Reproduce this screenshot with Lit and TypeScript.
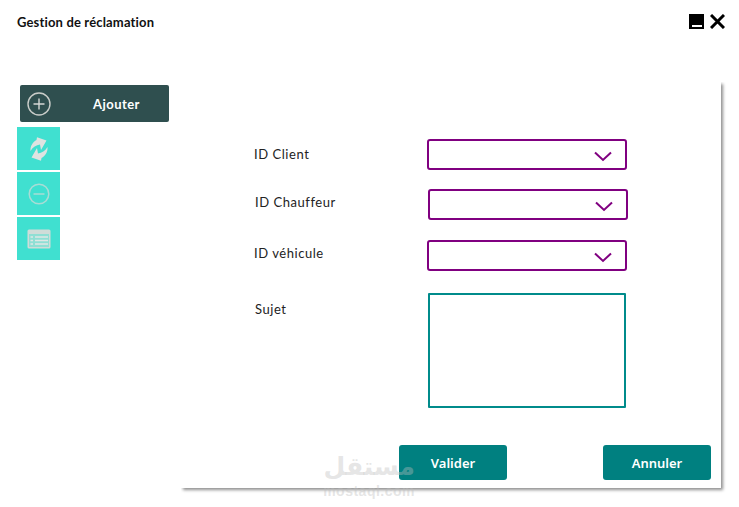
import { LitElement, html, css } from "lit";
import { customElement } from "lit/decorators.js";

const chevron = html`<svg class="chev" width="18" height="11" viewBox="0 0 18 11"><path d="M1 1.5 L9 9 L17 1.5" fill="none" stroke="#800080" stroke-width="2"/></svg>`;

@customElement("app-root")
export class AppRoot extends LitElement {
  static styles = css`
    :host { display: block; position: relative; width: 739px; height: 507px; background: #fff; overflow: hidden; font-family: "Lato", "Liberation Sans", sans-serif; color: #111; }
    .head { height: 82px; box-sizing: border-box; display: flex; align-items: flex-start; justify-content: space-between; padding: 14px 14px 0 17px; }
    .title { font-size: 13px; font-weight: 700; line-height: 17px; letter-spacing: 0.16px; color: #111; }
    .winbtns { display: flex; align-items: center; gap: 6px; }
    .min { display: flex; align-items: flex-end; justify-content: center; width: 15px; height: 15px; background: #000; box-sizing: border-box; padding-bottom: 2px; }
    .min i { display: block; width: 10px; height: 2px; background: #fff; }
    .body { display: flex; }
    .side { width: 181px; padding: 3px 0 0 17px; box-sizing: border-box; display: flex; flex-direction: column; }
    .add { display: flex; align-items: center; width: 149px; height: 37px; margin-left: 3px; margin-bottom: 5px; background: #2f4f4f; border-radius: 2px; color: #fff; box-sizing: border-box; padding-left: 7px; font-size: 13px; font-weight: 700; }
    .add span { margin-left: 42px; letter-spacing: 0.45px; }
    .tile { width: 43px; height: 43px; background: #40e0d0; display: flex; align-items: center; justify-content: center; margin-bottom: 2px; }
    .panel { width: 540px; height: 406px; background: #fff; box-shadow: 2px 2px 3px #8f8f8f; clip-path: inset(0 -6px -6px 0); box-sizing: border-box; padding: 57px 10px 0 73px; }
    .row { display: flex; align-items: flex-start; }
    .row label { width: 173px; font-size: 13px; letter-spacing: 0.55px; line-height: 18px; color: #222; }
    .r1 label { margin-top: 6px; }
    .r2 { margin-top: 19px; padding-left: 1px; }
    .r2 label { margin-top: 4px; }
    .r3 { margin-top: 20px; }
    .r3 label { margin-top: 4px; }
    .r4 { margin-top: 22px; padding-left: 1px; }
    .r4 label { margin-top: 7px; }
    .sel { width: 200px; height: 31px; box-sizing: border-box; border: 2px solid #800080; border-radius: 3px; display: flex; align-items: center; justify-content: flex-end; padding: 3px 13px 0 0; }
    .area { width: 198px; height: 115px; box-sizing: border-box; border: 2px solid #008b8b; border-radius: 1px; }
    .actions { display: flex; justify-content: flex-end; gap: 96px; margin-top: 37px; }
    .btn { width: 108px; height: 35px; background: #008080; color: #fff; border-radius: 3px; display: flex; align-items: center; justify-content: center; font-family: "Noto Sans", sans-serif; font-size: 13px; font-weight: 600; }
    .mark { position: absolute; left: 320px; top: 449px; width: 95px; text-align: right; color: rgba(190,190,190,0.4); pointer-events: none; }
    .mark b { display: block; font-family: "DejaVu Sans", sans-serif; font-size: 25px; line-height: 36px; font-weight: 700; }
    .mark small { display: block; font-family: "Liberation Sans", sans-serif; font-size: 14px; line-height: 12px; font-weight: 700; letter-spacing: 0.5px; }
  `;

  render() {
    return html`
      <div class="head">
        <div class="title">Gestion de réclamation</div>
        <div class="winbtns">
          <div class="min"><i></i></div>
          <svg width="15" height="15" viewBox="0 0 15 15"><path d="M1 1 L14 14 M14 1 L1 14" stroke="#000" stroke-width="3" fill="none"/></svg>
        </div>
      </div>
      <div class="body">
        <div class="side">
          <div class="add">
            <svg width="24" height="24" viewBox="0 0 24 24"><circle cx="12" cy="12" r="11" fill="none" stroke="#c9cdc9" stroke-width="1.4"/><path d="M12 6.500 V17.500 M6.500 12 H17.500" stroke="#d5d8d5" stroke-width="1.4"/></svg>
            <span>Ajouter</span>
          </div>
          <div class="tile">
            <svg width="20" height="24" viewBox="0 0 20 24"><path d="M1.500 14 C1 9 4 5 7.500 3 L8 0.200 L17.500 3.500 L12 13 L11 7.500 C7 8 4 10 1.500 14 Z" fill="#dfe3e1"/><path d="M18.500 10 C19 15 16 19 12.500 21 L12 23.800 L2.500 20.500 L8 11 L9 16.500 C13 16 16 14 18.500 10 Z" fill="#dfe3e1"/></svg>
          </div>
          <div class="tile">
            <svg width="22" height="22" viewBox="0 0 22 22"><circle cx="11" cy="11" r="9.800" fill="none" stroke="#a9dcd5" stroke-width="1.500"/><path d="M5.500 11 H16.500" stroke="#a9dcd5" stroke-width="1.500"/></svg>
          </div>
          <div class="tile">
            <svg width="24" height="20" viewBox="0 0 24 20"><rect x="0.500" y="0.500" width="23" height="19" rx="1.500" fill="#cfdcd8"/><rect x="2" y="5" width="20" height="13" fill="#8fdfd4"/><path d="M8 8 H21 M8 11.500 H21 M8 15 H21 M3.500 8 H6 M3.500 11.500 H6 M3.500 15 H6" stroke="#dfe8e5" stroke-width="1.300"/></svg>
          </div>
        </div>
        <div class="panel">
          <div class="row r1"><label>ID Client</label><div class="sel">${chevron}</div></div>
          <div class="row r2"><label>ID Chauffeur</label><div class="sel">${chevron}</div></div>
          <div class="row r3"><label>ID véhicule</label><div class="sel">${chevron}</div></div>
          <div class="row r4"><label>Sujet</label><div class="area"></div></div>
          <div class="actions">
            <div class="btn">Valider</div>
            <div class="btn">Annuler</div>
          </div>
        </div>
      </div>
      <div class="mark"><b>مستقل</b><small>mostaql.com</small></div>
    `;
  }
}
